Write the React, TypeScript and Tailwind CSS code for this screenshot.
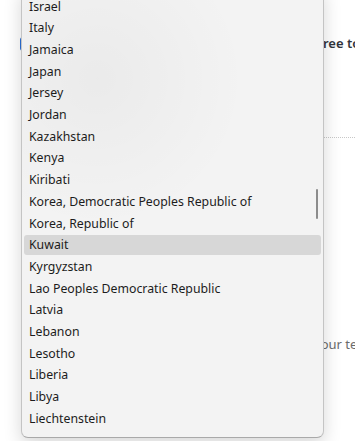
import React from 'react';

const COUNTRIES = [
  'Israel',
  'Italy',
  'Jamaica',
  'Japan',
  'Jersey',
  'Jordan',
  'Kazakhstan',
  'Kenya',
  'Kiribati',
  'Korea, Democratic Peoples Republic of',
  'Korea, Republic of',
  'Kuwait',
  'Kyrgyzstan',
  'Lao Peoples Democratic Republic',
  'Latvia',
  'Lebanon',
  'Lesotho',
  'Liberia',
  'Libya',
  'Liechtenstein',
];

const SELECTED = 'Kuwait';

const App: React.FC = () => {
  return (
    <div className="relative w-[355px] h-[441px] overflow-hidden bg-white font-['Noto_Sans',_sans-serif]">
      {/* page underneath the open select */}
      <div className="flex flex-col pl-[20px] pt-[34px]">
        <div className="flex items-center gap-2">
          <span className="w-[14px] h-[14px] shrink-0 rounded-[3px] bg-[#2b6fd6]" />
          <span className="shrink-0 text-[13px] font-semibold text-[#30343c] pl-[257px] whitespace-nowrap">I agree to the terms</span>
        </div>
        <div className="mt-[83px] ml-[300px] border-t border-dotted border-[#c8c8c8]" />
        <div className="mt-[197px] pl-[294px] text-[13px] text-[#6b6b6b] whitespace-nowrap">your terms</div>
      </div>

      {/* dropdown list */}
      <div className="absolute left-[21px] top-[-12px] w-[303px] h-[450px] bg-[#f3f3f3] border border-[#c4c4c4] border-b-[#a9a9a9] rounded-b-[7px] shadow-[0_6px_18px_rgba(0,0,0,0.16)] overflow-hidden">
        <div className="absolute inset-0 bg-[radial-gradient(circle_at_25%_20%,rgba(0,0,0,0.035),transparent_35%)]" />
        <ul className="relative flex flex-col gap-[1.68px] px-[2px] pt-[8px]">
          {COUNTRIES.map(c => (
            <li
              key={c}
              className={`h-[20px] flex items-center pl-[5px] rounded-[3px] text-[12.3px] text-[#1c1c1c] whitespace-nowrap ${c === SELECTED ? 'bg-[#d7d7d7]' : ''}`}
            >
              {c}
            </li>
          ))}
        </ul>
        <div className="absolute left-[294px] top-[200px] w-[2px] h-[30px] rounded-full bg-[#8c8c8c]" />
      </div>
    </div>
  );
};

export default App;
